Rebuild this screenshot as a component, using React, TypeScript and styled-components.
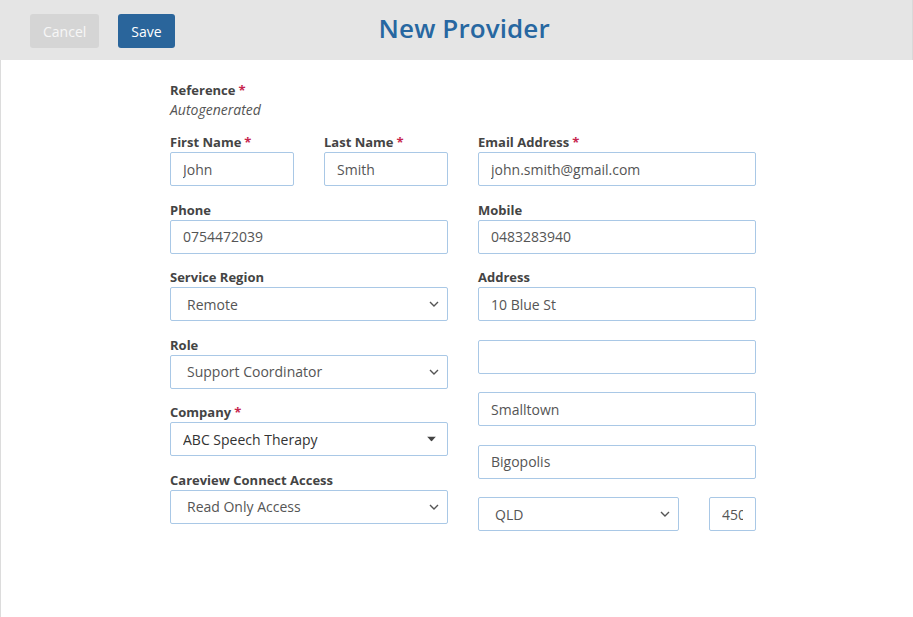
import React from "react";
import styled, { createGlobalStyle } from "styled-components";

const Global = createGlobalStyle`
  html, body { margin: 0; padding: 0; background: #fff; }
  body { font-family: "Open Sans", "Noto Sans", Arial, sans-serif; }
  * { box-sizing: border-box; }
`;

const Page = styled.div`
  width: 913px;
  height: 617px;
  display: flex;
  flex-direction: column;
  overflow: hidden;
`;

const Header = styled.header`
  height: 60px;
  flex: none;
  background: #e5e5e5;
  border-right: 1px solid #d9d9d9;
  display: flex;
  align-items: center;
  padding-left: 30px;
`;

const Button = styled.button<{ $primary?: boolean }>`
  height: 34px;
  padding: 0 13px;
  border: none;
  border-radius: 3px;
  font-family: "Open Sans", Arial, sans-serif;
  font-size: 14px;
  color: ${(p) => (p.$primary ? "#ffffff" : "#f7f7f7")};
  background: ${(p) => (p.$primary ? "#2a659b" : "#d5d5d5")};
  margin-right: 19px;
  margin-top: 2px;
`;

const Title = styled.h1`
  margin: 0 0 5px 185px;
  font-size: 26px;
  font-weight: 600;
  color: #2767a1;
  letter-spacing: 0.1px;
`;

const Content = styled.main`
  flex: 1;
  border-left: 1px solid #dcdcdc;
  padding: 18px 0 0 169px;
`;

const Form = styled.div`
  width: 586px;
  display: flex;
  flex-direction: column;
`;

const RefBlock = styled.div`
  margin-bottom: 14px;
`;

const Columns = styled.div`
  display: grid;
  grid-template-columns: 278px 278px;
  column-gap: 30px;
  align-items: start;
`;

const Column = styled.div<{ $gap: number }>`
  display: flex;
  flex-direction: column;
  gap: ${(p) => p.$gap}px;
`;

const Stack = styled.div<{ $gap: number }>`
  display: flex;
  flex-direction: column;
  gap: ${(p) => p.$gap}px;
`;

const Pair = styled.div<{ $cols: string }>`
  display: grid;
  grid-template-columns: ${(p) => p.$cols};
  column-gap: 30px;
`;

const Field = styled.div`
  display: flex;
  flex-direction: column;
`;

const Label = styled.label`
  font-size: 13px;
  font-weight: 700;
  color: #444;
  line-height: 19px;
  height: 19px;
`;

const Req = styled.span`
  color: #c7254e;
  margin-left: 3px;
`;

const Auto = styled.div`
  font-size: 14px;
  font-style: italic;
  color: #555;
  line-height: 19px;
`;

const Input = styled.input`
  height: 34px;
  width: 100%;
  border: 1px solid #a9c8e6;
  border-radius: 2px;
  padding: 0 12px;
  font-family: "Open Sans", Arial, sans-serif;
  font-size: 14px;
  color: #555;
  background: #fff;
  outline: none;
`;

const SelectWrap = styled.div`
  position: relative;
  height: 34px;
  width: 100%;
`;

const Select = styled.select<{ $pad?: number }>`
  appearance: none;
  -webkit-appearance: none;
  height: 34px;
  width: 100%;
  border: 1px solid #a9c8e6;
  border-radius: 2px;
  padding: 0 30px 0 ${(p) => p.$pad ?? 16}px;
  font-family: "Open Sans", Arial, sans-serif;
  font-size: 14px;
  color: ${(p) => (p.$pad === 12 ? "#333" : "#555")};
  background: #fff;
  outline: none;
`;

const Arrow = styled.span<{ $right: number }>`
  position: absolute;
  right: ${(p) => p.$right}px;
  top: 50%;
  transform: translateY(-50%);
  display: flex;
  pointer-events: none;
`;

const Chevron = () => (
  <svg width="10" height="6" viewBox="0 0 10 6">
    <path d="M1 1 L5 5 L9 1" fill="none" stroke="#555" strokeWidth="1.4" />
  </svg>
);

const Caret = () => (
  <svg width="9" height="5" viewBox="0 0 9 5">
    <path d="M0 0 H9 L4.5 5 Z" fill="#444" />
  </svg>
);

const TextField = ({ label, value, req }: { label?: string; value: string; req?: boolean }) => (
  <Field>
    {label && (
      <Label>
        {label}
        {req && <Req>*</Req>}
      </Label>
    )}
    <Input defaultValue={value} />
  </Field>
);

const SelectField = ({
  label,
  value,
  req,
  caret,
}: {
  label?: string;
  value: string;
  req?: boolean;
  caret?: boolean;
}) => (
  <Field>
    {label && (
      <Label>
        {label}
        {req && <Req>*</Req>}
      </Label>
    )}
    <SelectWrap>
      <Select $pad={caret ? 12 : 16} defaultValue={value}>
        <option>{value}</option>
      </Select>
      <Arrow $right={caret ? 12 : 9}>{caret ? <Caret /> : <Chevron />}</Arrow>
    </SelectWrap>
  </Field>
);

export default function App() {
  return (
    <Page>
      <Global />
      <Header>
        <Button>Cancel</Button>
        <Button $primary>Save</Button>
        <Title>New Provider</Title>
      </Header>
      <Content>
        <Form>
          <RefBlock>
            <Label>
              Reference<Req>*</Req>
            </Label>
            <Auto>Autogenerated</Auto>
          </RefBlock>
          <Columns>
            <Column $gap={14.5}>
              <Pair $cols="124px 124px">
                <TextField label="First Name" value="John" req />
                <TextField label="Last Name" value="Smith" req />
              </Pair>
              <TextField label="Phone" value="0754472039" />
              <SelectField label="Service Region" value="Remote" />
              <SelectField label="Role" value="Support Coordinator" />
              <SelectField label="Company" value="ABC Speech Therapy" req caret />
              <SelectField label="Careview Connect Access" value="Read Only Access" />
            </Column>
            <Column $gap={14.5}>
              <TextField label="Email Address" value="john.smith@gmail.com" req />
              <TextField label="Mobile" value="0483283940" />
              <Stack $gap={18.5}>
                <TextField label="Address" value="10 Blue St" />
                <TextField value="" />
                <TextField value="Smalltown" />
                <TextField value="Bigopolis" />
                <Pair $cols="201px 47px">
                  <SelectField value="QLD" />
                  <TextField value="4500" />
                </Pair>
              </Stack>
            </Column>
          </Columns>
        </Form>
      </Content>
    </Page>
  );
}
